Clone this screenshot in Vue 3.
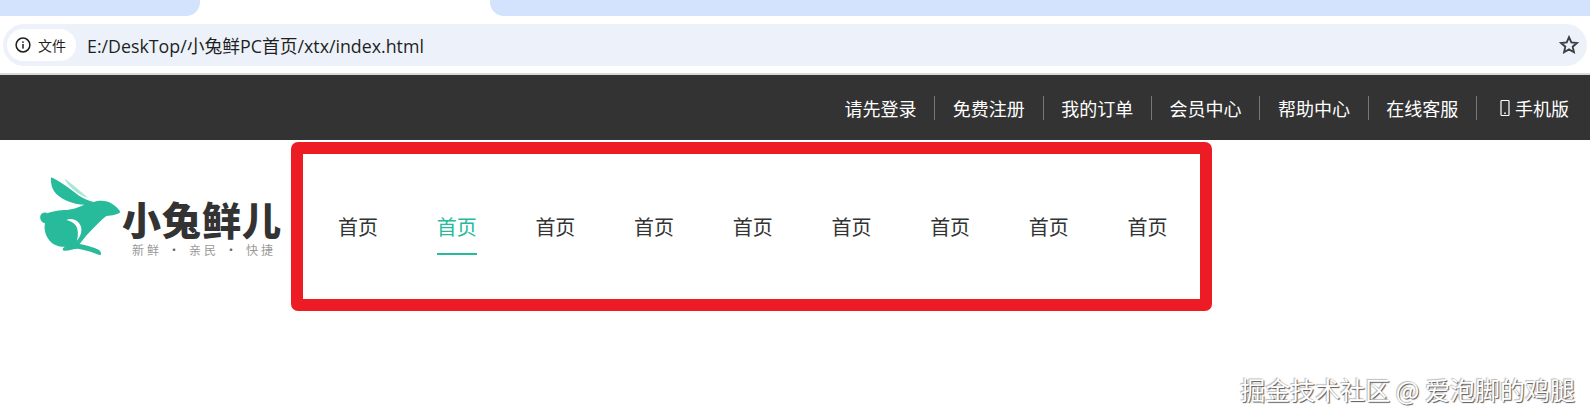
<template>
  <div class="page">
    <!-- browser chrome -->
    <div class="tabs">
      <div class="tab tab-left"></div>
      <div class="tab-active"></div>
      <div class="tab tab-right"></div>
    </div>
    <div class="toolbar">
      <div class="omnibox">
        <div class="chip">
          <svg class="info" viewBox="0 0 16 16" width="16" height="16">
            <circle cx="8" cy="8" r="6.9" fill="none" stroke="#1f1f1f" stroke-width="1.5" />
            <rect x="7.25" y="7" width="1.5" height="4.6" fill="#1f1f1f" />
            <rect x="7.25" y="4.4" width="1.5" height="1.5" fill="#1f1f1f" />
          </svg>
          <span>文件</span>
        </div>
        <span class="url">E:/DeskTop/小兔鲜PC首页/xtx/index.html</span>
        <svg class="star" viewBox="0 0 20 20" width="20" height="20">
          <path d="M10 2.2l2.3 5.2 5.6.6-4.2 3.7 1.2 5.5L10 14.4l-4.9 2.8 1.2-5.5L2.1 8l5.6-.6z" fill="none" stroke="#3c4043" stroke-width="1.9" stroke-linejoin="miter" />
        </svg>
      </div>
    </div>

    <!-- shortcut bar -->
    <div class="shortcut">
      <a v-for="link in links" :key="link" class="short-link">{{ link }}</a>
      <a class="short-link last">
        <svg class="phone" viewBox="0 0 12 18" width="12" height="18">
          <rect x="2" y="1.5" width="8" height="15" rx="0.8" fill="none" stroke="#fff" stroke-width="1.2" />
          <rect x="5" y="13.6" width="2" height="1.2" fill="#fff" />
        </svg>手机版
      </a>
    </div>

    <!-- header -->
    <div class="header">
      <div class="logo">
        <svg class="rabbit" viewBox="0 0 270 270" width="90" height="90">
          <path d="M88 26C108 38 128 56 160 84L150 80C124 70 100 48 88 26Z" fill="#a9e6d3" />
          <path d="M48 22C74 32 100 54 128 74C146 86 162 92 176 96C192 90 216 90 232 102C244 110 252 118 256 126C248 134 232 136 214 138C198 150 182 168 164 186C152 198 142 212 134 222C154 226 176 232 192 240C198 244 200 252 196 256C178 248 152 240 128 236C116 236 104 242 88 242C80 240 82 232 92 230C76 232 56 226 44 212C32 198 26 178 30 160C20 158 14 148 16 138C18 128 30 124 38 130C50 124 72 120 96 120C112 118 132 112 148 104C120 104 84 92 64 72C52 60 46 40 48 22Z" fill="#27ba9b" />
          <path d="M94 150C112 142 132 152 138 170C142 184 136 200 126 212C130 194 130 178 122 166C114 156 104 152 94 150Z" fill="#fff" />
        </svg>
        <div class="logo-text">
          <div class="brand">小兔鲜儿</div>
          <div class="slogan"><span>新鲜</span><i>·</i><span>亲民</span><i>·</i><span>快捷</span></div>
        </div>
      </div>

      <div class="nav">
        <a v-for="(item, i) in nav" :key="i" :class="['nav-item', { active: i === 1 }]">{{ item }}</a>
      </div>
    </div>

    <div class="watermark">掘金技术社区 @ 爱泡脚的鸡腿</div>
  </div>
</template>

<script setup>
const links = ['请先登录', '免费注册', '我的订单', '会员中心', '帮助中心', '在线客服']
const nav = Array(9).fill('首页')
</script>

<style>
html, body {
  margin: 0;
  background: #fff;
}
</style>

<style scoped>
.page {
  position: relative;
  width: 1590px;
  height: 417px;
  overflow: hidden;
  background: #fff;
  font-family: "Noto Sans CJK SC", sans-serif;
}

.tabs {
  display: flex;
  height: 16px;
  background: #fff;
}
.tab-active {
  width: 290px;
}
.tab {
  background: #d3e3fd;
}
.tab-left {
  width: 200px;
  border-bottom-right-radius: 14px;
}
.tab-right {
  flex: 1;
  border-bottom-left-radius: 14px;
}

.toolbar {
  height: 59px;
  padding: 8px 3px 0;
  box-sizing: border-box;
  background: #fff;
  border-bottom: 2px solid #d9d9d9;
}
.omnibox {
  display: flex;
  align-items: center;
  height: 42px;
  border-radius: 21px;
  background: #edf2fa;
  padding: 0 8px 0 4px;
}
.chip {
  display: flex;
  align-items: center;
  gap: 7px;
  height: 32px;
  padding: 0 10px 0 8px;
  border-radius: 16px;
  background: #fff;
  font-size: 14px;
  color: #1f1f1f;
}
.url {
  margin-left: 11px;
  font-family: "Open Sans", "Noto Sans CJK SC", sans-serif;
  font-size: 17.8px;
  color: #1f1f1f;
}
.star {
  margin-left: auto;
}

.shortcut {
  display: flex;
  justify-content: flex-end;
  align-items: center;
  height: 65px;
  padding-right: 21px;
  background: #333;
}
.short-link {
  padding: 0 17.7px;
  border-right: 1px solid #777;
  height: 24px;
  line-height: 24px;
  font-size: 18px;
  color: #fff;
  display: flex;
  align-items: center;
}
.short-link.last {
  border-right: none;
  padding: 0 0 0 22px;
}
.phone {
  margin-right: 4px;
}

.header {
  display: flex;
  align-items: flex-start;
  padding-top: 2px;
}
.logo {
  display: flex;
  width: 291px;
  padding: 28px 0 0 35px;
  box-sizing: border-box;
}
.rabbit {
  flex: none;
  margin-right: -3px;
}
.logo-text {
  display: flex;
  flex-direction: column;
  padding-top: 26px;
}
.brand {
  font-size: 39px;
  line-height: 44px;
  font-weight: 900;
  color: #333;
  white-space: nowrap;
  letter-spacing: 1px;
}
.slogan {
  display: flex;
  justify-content: space-between;
  width: 141px;
  margin: 3px 0 0 10px;
  font-size: 12px;
  line-height: 14px;
  color: #999;
}
.slogan span {
  width: 27px;
  letter-spacing: 3px;
  white-space: nowrap;
}
.slogan i {
  font-style: normal;
  color: #666;
}

.nav {
  display: flex;
  align-items: flex-start;
  gap: 58.7px;
  width: 921px;
  height: 169px;
  box-sizing: border-box;
  border: 12px solid #ed1c24;
  border-radius: 7px;
  padding: 58px 0 0 35px;
}
.nav-item {
  height: 41px;
  border-bottom: 2px solid transparent;
  font-size: 20px;
  line-height: 30px;
  color: #333;
}
.nav-item.active {
  color: #27ba9b;
  border-bottom-color: #27ba9b;
}

.watermark {
  position: absolute;
  right: 15px;
  bottom: 13px;
  font-size: 25px;
  line-height: 30px;
  color: #fff;
  text-shadow: 1px 1px 1px #555, -1px -1px 1px #bbb;
  white-space: nowrap;
}
</style>
